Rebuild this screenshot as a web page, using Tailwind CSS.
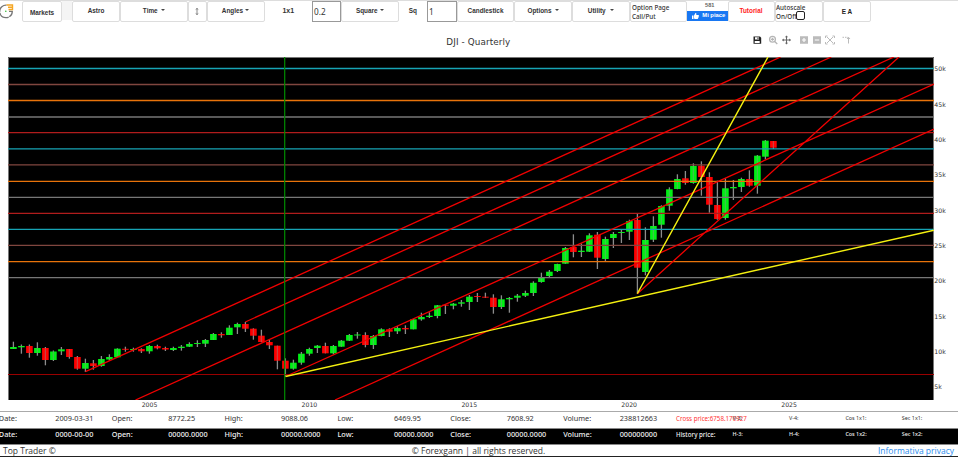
<!DOCTYPE html>
<html lang="en">
<head>
<meta charset="utf-8">
<title>DJI - Quarterly</title>
<script src="https://cdn.jsdelivr.net/npm/@tailwindcss/browser@4"></script>
</head>
<body class="w-[958px] h-[457px] overflow-hidden bg-white font-['Open_Sans','Noto_Sans',sans-serif] text-[#333] flex flex-col">

<header class="h-[23px] shrink-0 flex border-t border-[#ddd] text-[6.400px] leading-[9px] font-bold font-['Liberation_Sans',sans-serif] text-[#333] whitespace-nowrap">
  <svg class="w-[22px] h-[22px] shrink-0" viewBox="0 0 22 22" fill="none">
    <path d="M6.500 4.100A6.300 6.300 0 1 0 12.300 10.300H9" stroke="#777" stroke-width="1.300" stroke-dasharray="11 .7"/>
    <path d="M6.500 4h6v4.500H8.500M8 6.200h4" stroke="#f5a623" stroke-width="1.400"/>
    <circle cx="5.800" cy="10.300" r=".8" fill="#3b3"/>
  </svg>
  <div class="w-[40px] h-[20.500px] border border-[#ddd] rounded-[2px] flex items-center justify-center pt-[2px]">Markets</div>
  <div class="w-[10px] h-[19px] bg-[#f4f4f4]"></div>
  <div class="w-[48px] h-[20.500px] border border-[#ddd] rounded-[2px] flex items-center justify-center pb-[2px]">Astro</div>
  <div class="w-[67.500px] h-[20.500px] border border-[#ddd] rounded-[2px] flex items-center justify-center gap-[3px] pb-[2px]">Time <i class="border-x-[2px] border-x-transparent border-t-[2px] border-t-[#444]"></i></div>
  <div class="w-[19px] h-[20.500px] border border-[#ddd] rounded-[2px] flex items-center justify-center">
    <svg class="w-[4px] h-[7px]" viewBox="0 0 4 7" fill="none" stroke="#555" stroke-width=".7"><path d="M2 .5v6M.7 1.500L2 .4l1.300 1.100M.7 5.500L2 6.600l1.300-1.100"/></svg>
  </div>
  <div class="w-[58px] h-[20.500px] border border-[#ddd] rounded-[2px] flex items-center justify-center gap-[2px] pb-[2px]">Angles <i class="border-x-[2px] border-x-transparent border-t-[2px] border-t-[#444]"></i></div>
  <div class="w-[47.500px] h-[20px] flex items-center justify-center pb-[2px] text-[7px]">1x1</div>
  <div class="w-[29px] h-[20.500px] border border-[#999] flex items-center pl-[1px] pt-[1px] font-normal text-[8.200px] font-['Noto_Sans',sans-serif]">0.2</div>
  <div class="w-[57.500px] h-[20.500px] border border-[#ddd] rounded-[2px] flex items-center justify-center gap-[2px] pb-[2px]">Square <i class="border-x-[2px] border-x-transparent border-t-[2px] border-t-[#444]"></i></div>
  <div class="w-[28.500px] h-[20px] flex items-center justify-center pb-[2px]">Sq</div>
  <div class="w-[30px] h-[20.500px] border border-[#999] flex items-center pl-[1px] pt-[1px] font-normal text-[8.200px] font-['Noto_Sans',sans-serif]">1</div>
  <div class="w-[57px] h-[20.500px] border border-[#ddd] rounded-[2px] flex items-center justify-center pb-[2px]">Candlestick</div>
  <div class="w-[58px] h-[20.500px] border border-[#ddd] rounded-[2px] flex items-center justify-center gap-[3px] pb-[2px]">Options <i class="border-x-[2px] border-x-transparent border-t-[2px] border-t-[#444]"></i></div>
  <div class="w-[57.500px] h-[20.500px] border border-[#ddd] rounded-[2px] flex items-center justify-center gap-[4px] pb-[2px]">Utility <i class="border-x-[2px] border-x-transparent border-t-[2px] border-t-[#444]"></i></div>
  <div class="w-[57.500px] h-[20.500px] border border-[#ddd] rounded-[2px] pl-[1.500px] pt-[1px] text-[6.300px] leading-[9px] font-medium font-['Noto_Sans',sans-serif] text-[#333]">Option Page<br>Call/Put</div>
  <div class="w-[40.500px] h-[20px] flex flex-col text-[5.600px]">
    <div class="h-[9.500px] flex items-center justify-center pl-[5px] text-[#666]">581</div>
    <div class="h-[10px] bg-[#1877f2] text-white flex items-center justify-center gap-[3px] pl-[3px] text-[5.800px]">
      <svg class="w-[7px] h-[6px]" viewBox="0 0 7 6" fill="#fff"><path d="M0 2.500h1.500V6H0zM2 2.500L3.500 0c1 0 1 1 .7 2H6.500c.6 0 .5.800.2 1 .2.500 0 .9-.2 1 .1.500-.1.800-.3 1 0 .700-.3 1-.8 1H3L2 5.500z"/></svg>Mi piace</div>
  </div>
  <div class="w-[47px] h-[20.500px] border border-[#ddd] rounded-[2px] flex items-center justify-center pb-[2px] text-[#f22]">Tutorial</div>
  <div class="w-[48.500px] h-[20.500px] border border-[#ddd] rounded-[2px] pl-[.5px] pt-[1px] text-[6.300px] leading-[9px] font-medium font-['Noto_Sans',sans-serif] text-[#333]">
    <div>Autoscale</div>
    <div class="flex items-start">On/Off<span class="-ml-px -mt-[1.500px] w-[9px] h-[9px] shrink-0 border border-[#222] rounded-[2px] bg-white"></span></div>
  </div>
  <div class="w-[48px] h-[20.500px] border border-[#ddd] rounded-[2px] flex items-center justify-center text-[#222]">E A</div>
</header>

<main class="h-[388px] shrink-0">
<svg id="chart" class="block w-[958px] h-[388px]" viewBox="0 23 958 388">
  <text x="478.300" y="45.300" text-anchor="middle" textLength="64" class="font-['DejaVu_Sans',sans-serif] text-[8.800px] fill-[#333]">DJI - Quarterly</text>
  <g fill="#bbb">
    <path fill="#222" fill-rule="evenodd" d="M753.500 36.500h6.500l1.200 1.200v6h-7.700zM755 37.300v2.200h4v-2.200zM754.700 41v2h5v-2z"/>
    <path fill="#222" d="M757.500 37.500h1v1.600h-1z"/>
    <g fill="none" stroke="#b5b5b5" stroke-width="1.300"><circle cx="772.500" cy="39.300" r="2.900"/><path d="M774.700 41.500l2.600 2.500M771 39.300h3M772.500 37.800v3" /></g>
    <path d="M786.500 36v8M782.500 40h8" stroke="#666" stroke-width="1"/>
    <path fill="#666" d="M786.500 35.500l1.600 1.800h-3.200zM786.500 44.500l1.600-1.800h-3.200zM782 40l1.800-1.600v3.200zM791 40l-1.800-1.600v3.200z"/>
    <path fill-rule="evenodd" d="M800 36.200h8v7.600h-8zM803.400 38v1.400H802v1.200h1.400V42h1.200v-1.400h1.400v-1.200h-1.400V38z"/>
    <path fill-rule="evenodd" d="M813 36.200h8v7.600h-8zM814.800 39.400v1.200h4.400v-1.200z"/>
    <path fill="none" stroke="#bbb" d="M825.500 38v-2h2M832.500 36h2v2M834.500 42v2h-2M827.500 44h-2v-2M827 37l6 6M833 37l-6 6"/>
    <path fill="none" stroke="#bbb" d="M848.500 43.500v-6M847 39l1.500-1.700L850 39"/><path stroke="#bbb" stroke-dasharray="1.500 1" d="M842.500 37.300h5.500"/>
  </g>
  <rect x="8" y="57" width="926" height="343" fill="#000"/>
  <path d="M8.500 400V57.500h925V400" fill="none" stroke="#777" stroke-width="1"/>
  <clipPath id="plot"><rect x="8" y="57" width="926" height="343"/></clipPath>
  <g id="candles" clip-path="url(#plot)"></g>
  <g id="levels" stroke-width="1.300"></g>
  <path d="M8 374.500h926" stroke="#900" stroke-width="1"/>
  <g clip-path="url(#plot)" fill="none" stroke-width="1.300">
    <path stroke="#f00000" d="M85.500 371.700L780.700 57M245.300 322L831.300 57M135.500 400L894 57M285.500 376.500L934 84M335 400L934 129M637.300 293.700L899 57"/>
    <path stroke="#f4f010" stroke-width="1.400" d="M285.500 376.500L934 230.200M637.300 293.700L768 57"/>
    <path stroke="#008c00" stroke-width="1.200" d="M284.700 57V400"/>
  </g>
  <g id="ticks" class="font-['DejaVu_Sans',sans-serif] text-[6.200px] fill-[#333]"></g>
</svg>
</main>

<section class="shrink-0 text-[7.300px] leading-[9px] whitespace-nowrap font-['Noto_Sans',sans-serif]">
  <div class="h-[18px] border-y border-t-[#aaa] border-b-[#888] pt-[2px] -ml-[1.200px] grid grid-cols-[repeat(17,56.450px)] text-[#333]">
    <span>Date:</span><span>2009-03-31</span><span>Open:</span><span>8772.25</span><span>High:</span><span>9088.06</span><span>Low:</span><span>6469.95</span><span>Close:</span><span>7608.92</span><span>Volume:</span><span>238812663</span><span class="text-[6.200px] text-[#f33]">Cross price:6758.170927</span><span class="text-[5.400px]">V-3:</span><span class="text-[5.400px]">V-4:</span><span class="text-[5.400px]">Cos 1x1:</span><span class="text-[5.400px]">Sec 1x1:</span>
  </div>
  <div class="h-[15px] bg-black pt-px font-medium overflow-hidden"><div class="-ml-[1.200px] grid grid-cols-[repeat(17,56.450px)] text-[#f0f0f0]">
    <span>Date:</span><span>0000-00-00</span><span>Open:</span><span>00000.0000</span><span>High:</span><span>00000.0000</span><span>Low:</span><span>00000.0000</span><span>Close:</span><span>00000.0000</span><span>Volume:</span><span>000000000</span><span class="text-[6.200px]">History price:</span><span class="text-[5.400px]">H-3:</span><span class="text-[5.400px]">H-4:</span><span class="text-[5.400px]">Cos 1x2:</span><span class="text-[5.400px]">Sec 1x2:</span>
  </div></div>
</section>
<footer class="h-[13px] shrink-0 border-t border-t-[#888] border-b border-b-[#222] grid grid-cols-3 items-center text-[8.500px] leading-[10px] pl-[3px] pr-[4px] text-[#333]">
  <span>Top Trader ©</span><span class="text-center">© Forexgann | all rights reserved.</span><span class="text-right text-[#2b8cee]">Informativa privacy</span>
</footer>

<script>
// Each quarter: direction, body top, body bottom, wick top, wick bottom
const quarters = `g 347 349 341.7 349|g 346 347.3 344.5 353.7|r 346 353 344.5 357.7|g 348 353 342.3 355.7|r 348 360 347 365.3|g 351.5 360 350.5 361|g 349.3 351.3 347 355|r 349 357 349 358.7|r 357 368.7 356 369.7|g 363 368.7 358.7 372|r 363.3 366 360 369.7|g 359 366 356 366.7|g 357 359.5 354.3 360.5|g 348.7 357.3 348.3 357.3|r 348.8 349.8 346.7 351.7|g 349 350 347.7 351.7|r 349 351.3 348.3 353|g 346 351.3 345 353.7|r 346 348.3 344.7 349.3|r 348 349.5 346.7 351|g 348 350 346.7 351|g 346.7 348 345 350.7|g 344 346.7 342.3 347|g 343 344 340.3 347|g 340 343.7 339 347|g 334 340 333 340|r 334 335.3 332.3 337.7|g 327.7 335 325.3 335|g 324 327.3 322.7 334|r 324 328.7 322 332|r 328.7 335.7 328.3 339.7|r 335.7 342 329.7 342.3|r 342 345.3 339.7 349|r 345.7 360.7 345.7 369.3|r 360.7 368.7 358.3 376.7|g 362.7 368.7 359.7 369.7|g 353.7 362.7 352 364.7|g 349 353.7 347.7 355.7|g 345.7 348 345 353|r 346 353.3 342.7 353.3|g 346 353.3 345 354.3|g 340.7 346.7 340 346.7|g 335 340.7 334 341|g 334.5 335.5 332 338.7|r 335 345 332.3 347.3|g 336 345 335 349|g 329.3 336 328.3 336.3|r 329.3 331.7 328.3 337|g 328 331.3 326 334|r 328 329.3 325.3 334|g 319.3 329.3 319 329.3|g 317 319.3 312.7 320.7|g 315.7 317 312.3 318|g 305.3 316 305 318.3|r 304.7 305.7 304.7 314|g 303.7 305.7 303 309.3|g 302.3 303.7 300 306.7|g 296.7 302 295 310|r 296 297 293 302|r 296.7 297.7 292.7 298|r 297.7 307 294.3 313.7|g 299.3 307 295.3 309|g 298 299.3 297 312.7|g 295.7 297.7 294 301.7|g 293 295.7 290.7 297|g 282.8 293 281.3 296|g 277 282 272.7 282.7|g 271.7 276 270 277.3|g 264 271 263.7 272|g 248 263.7 247 263.7|r 247 252 234.3 257.3|g 250.7 252 243.3 257|g 235.3 251.7 233.3 252|r 234.7 257.7 232 269|g 239 259 236.7 261.3|g 234 238 232 248|g 232 233 229 243|g 221 231.7 219.7 240|r 220 267.7 213.3 293.7|g 240 272 227.3 275.3|g 226 239.7 216.3 242|g 206 224.7 205.3 237.7|g 189.3 205.7 187.3 210.7|g 179 189 174.3 189.3|r 178.3 183 171 184.7|g 166 183 163.3 183.7|r 165.7 177 161.3 195.7|r 177 204.7 172.3 212.7|r 205 219 180.7 219.7|g 188.3 218 178.3 219.7|g 187 188.3 180 200|g 179 187 177.7 192|r 179 185.7 170.3 186.7|g 155.7 185.7 155 193.7|g 140.7 156.7 140 159.3|r 141 147.7 141 149`.split('|');
document.getElementById('candles').innerHTML = quarters.map((q, i) => {
  const [dir, top, bottom, high, low] = q.split(' ');
  const x = 13.4 + i * 8;
  return `<path d="M${x} ${high}V${low}" stroke="#8c8c8c" stroke-width="1.3"/>` +
    `<rect x="${x - 3.3}" y="${top}" width="6.6" height="${bottom - top}" fill="${dir === 'g' ? '#00f014' : '#ff0000'}"/>` +
    `<path d="M${x} ${top}V${bottom}" stroke="#8c8c8c" stroke-opacity=".45" stroke-width="1.2"/>`;
}).join('');

const levels = [[68.5,'#17a4b5'],[84.5,'#80463f'],[100.5,'#e8730b'],[117,'#777'],[132.7,'#b01c1c'],[148.8,'#17a4b5'],[164.8,'#80463f'],[181.3,'#e8730b'],[197.4,'#777'],[213.4,'#b01c1c'],[229.3,'#17a4b5'],[245.3,'#80463f'],[261.6,'#e8730b'],[277.7,'#777']];
document.getElementById('levels').innerHTML = levels.map(([y, c]) => `<path d="M8 ${y}H934" stroke="${c}"/>`).join('');

let ticks = '';
for (let i = 0; i < 5; i++) ticks += `<text x="${149.5 + i * 159.9}" y="406.8" text-anchor="middle">${2005 + i * 5}</text>`;
for (let i = 0; i < 10; i++) ticks += `<text x="934.3" y="${71.2 + i * 35.35}">${50 - i * 5}k</text>`;
document.getElementById('ticks').innerHTML = ticks;
</script>
</body>
</html>
